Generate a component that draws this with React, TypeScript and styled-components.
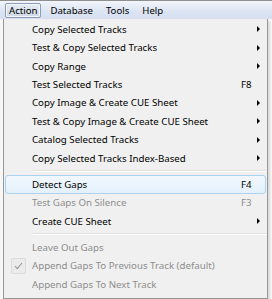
import { createGlobalStyle } from "styled-components";
import styled from "styled-components";

const GlobalStyle = createGlobalStyle`
  html, body {
    margin: 0;
    padding: 0;
    background: #ffffff;
  }
  body {
    font-family: "Noto Sans", "Open Sans", sans-serif;
    font-size: 9.7px;
    color: #000;
  }
`;

const Window = styled.div`
  width: 272px;
  height: 299px;
  overflow: hidden;
  background: #ffffff;
  display: flex;
  flex-direction: column;
`;

const MenuBar = styled.div`
  height: 18px;
  border-top: 1px solid #8e8f8f;
  background: linear-gradient(#f2f5fb, #dbe4f3 60%, #d5dff0);
  display: flex;
  align-items: center;
  padding-left: 5px;
  gap: 5px;
`;

const BarItem = styled.div<{ $open?: boolean }>`
  height: 15px;
  padding: 0 3px;
  display: flex;
  align-items: center;
  font-size: 9.6px;
  border-radius: 2px;
  box-sizing: border-box;
  border: 1px solid ${(p) => (p.$open ? "#8c9cb4" : "transparent")};
  background: ${(p) =>
    p.$open ? "linear-gradient(#e6ebf3, #d0d9e6)" : "transparent"};
  box-shadow: ${(p) => (p.$open ? "inset 0 0 0 1px #f4f6fa" : "none")};
`;

const Stage = styled.div`
  flex: 1;
  display: flex;
  background: #f7f7f7;
`;

const Dropdown = styled.div`
  margin-left: 3px;
  width: 265px;
  box-sizing: border-box;
  border: 1px solid #979797;
  border-top: none;
  background: #f0f0f0;
  padding: 1px 1px 2px;
  display: flex;
  flex-direction: column;
  box-shadow: 2px 2px 2px rgba(0, 0, 0, 0.12);
`;

const Item = styled.div<{ $disabled?: boolean; $hot?: boolean }>`
  height: 18.45px;
  box-sizing: border-box;
  display: grid;
  grid-template-columns: 25px 1fr 12px 12px;
  align-items: center;
  border-radius: 3px;
  border: 1px solid ${(p) => (p.$hot ? "#a9d3ef" : "transparent")};
  background: ${(p) =>
    p.$hot ? "linear-gradient(#f2f8fd, #e3f0fb)" : "transparent"};
  color: ${(p) => (p.$disabled ? "#8d8d8d" : "#000")};
  white-space: nowrap;
`;

const Label = styled.span`
  padding-left: 1px;
`;

const Shortcut = styled.span`
  text-align: left;
`;

const Arrow = styled.span`
  width: 0;
  height: 0;
  border-top: 3px solid transparent;
  border-bottom: 3px solid transparent;
  border-left: 3px solid #000;
  justify-self: start;
  margin-left: 4px;
`;

const Gutter = styled.span`
  display: flex;
  align-items: center;
  justify-content: center;
`;

const CheckBox = styled.span`
  width: 15px;
  height: 16px;
  box-sizing: border-box;
  border: 1px solid #dcdcdc;
  border-radius: 2px;
  background: #ebebeb;
  display: flex;
  align-items: center;
  justify-content: center;
  margin-left: -1px;
`;

const Separator = styled.div`
  height: 7.6px;
  display: flex;
  align-items: center;
  padding-left: 28px;
  &::after {
    content: "";
    flex: 1;
    height: 1px;
    background: #e0e0e0;
    border-bottom: 1px solid #ffffff;
  }
`;

type Entry =
  | { kind: "sep" }
  | {
      kind: "item";
      label: string;
      key?: string;
      sub?: boolean;
      disabled?: boolean;
      hot?: boolean;
      checked?: boolean;
    };

const entries: Entry[] = [
  { kind: "item", label: "Copy Selected Tracks", sub: true },
  { kind: "item", label: "Test & Copy Selected Tracks", sub: true },
  { kind: "item", label: "Copy Range", sub: true },
  { kind: "item", label: "Test Selected Tracks", key: "F8" },
  { kind: "item", label: "Copy Image & Create CUE Sheet", sub: true },
  { kind: "item", label: "Test & Copy Image & Create CUE Sheet", sub: true },
  { kind: "item", label: "Catalog Selected Tracks", sub: true },
  { kind: "item", label: "Copy Selected Tracks Index-Based", sub: true },
  { kind: "sep" },
  { kind: "item", label: "Detect Gaps", key: "F4", hot: true },
  { kind: "item", label: "Test Gaps On Silence", key: "F3", disabled: true },
  { kind: "item", label: "Create CUE Sheet", sub: true },
  { kind: "sep" },
  { kind: "item", label: "Leave Out Gaps", disabled: true },
  {
    kind: "item",
    label: "Append Gaps To Previous Track (default)",
    disabled: true,
    checked: true,
  },
  { kind: "item", label: "Append Gaps To Next Track", disabled: true },
];

const Check = () => (
  <svg width="9" height="8" viewBox="0 0 9 8">
    <path d="M1 4.2 L3.3 6.6 L8 1" fill="none" stroke="#9a9a9a" strokeWidth="1.1" />
  </svg>
);

export default function App() {
  return (
    <>
      <GlobalStyle />
      <Window>
        <MenuBar>
          <BarItem $open>Action</BarItem>
          <BarItem>Database</BarItem>
          <BarItem>Tools</BarItem>
          <BarItem>Help</BarItem>
        </MenuBar>
        <Stage>
          <Dropdown>
            {entries.map((e, i) =>
              e.kind === "sep" ? (
                <Separator key={i} />
              ) : (
                <Item key={i} $disabled={e.disabled} $hot={e.hot}>
                  <Gutter>
                    {e.checked ? (
                      <CheckBox>
                        <Check />
                      </CheckBox>
                    ) : null}
                  </Gutter>
                  <Label>{e.label}</Label>
                  <Shortcut>{e.key ?? ""}</Shortcut>
                  {e.sub ? <Arrow /> : <span />}
                </Item>
              )
            )}
          </Dropdown>
        </Stage>
      </Window>
    </>
  );
}
